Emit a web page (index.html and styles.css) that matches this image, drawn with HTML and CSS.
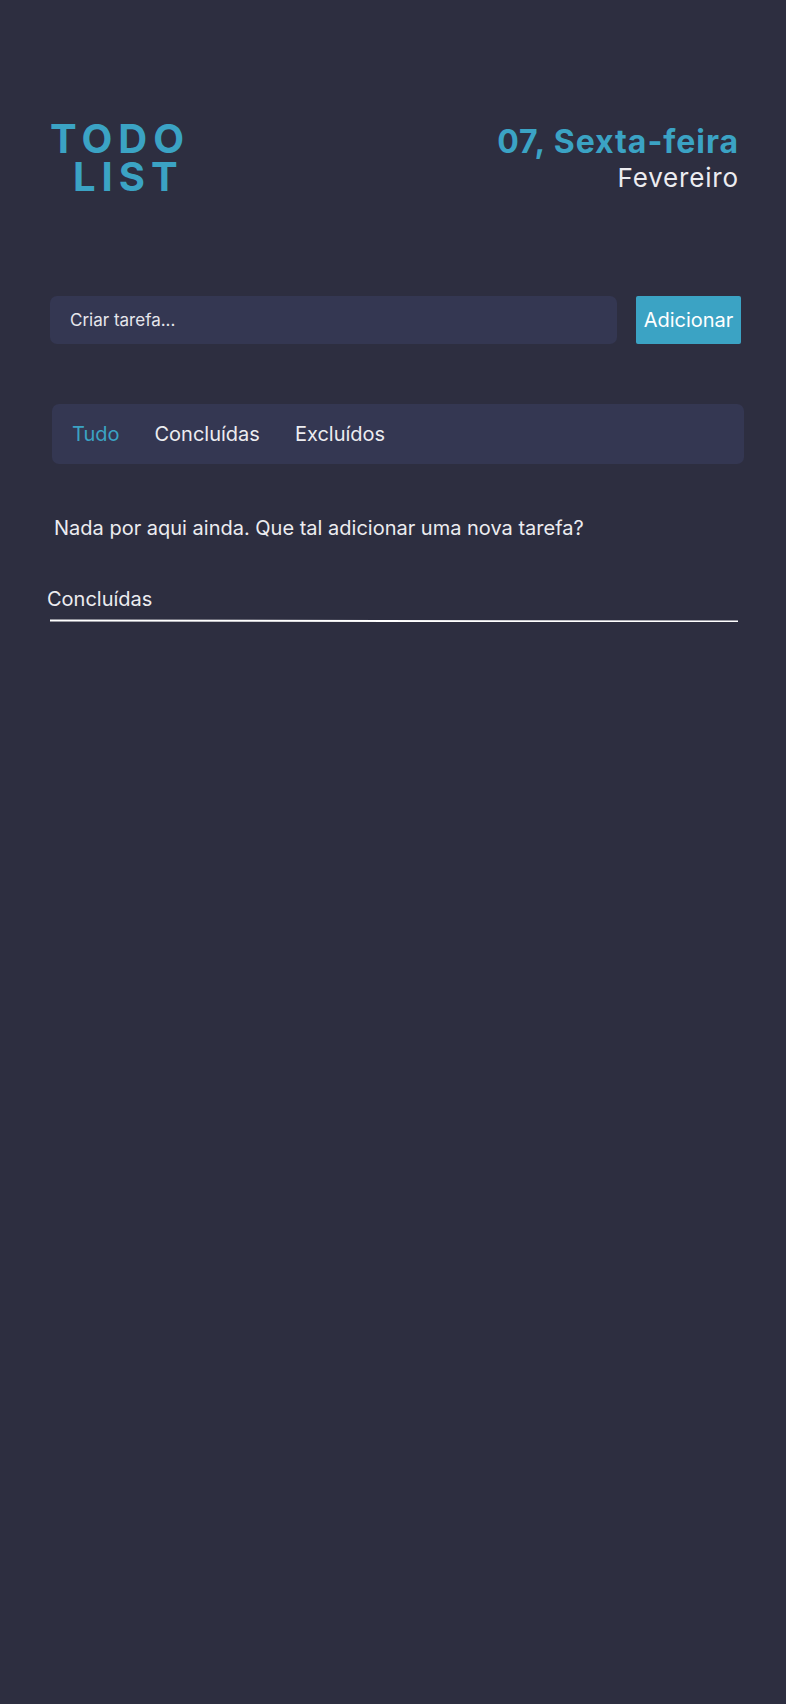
FILE: index.html
```html
<!DOCTYPE html>
<html lang="pt-BR">
<head>
<meta charset="utf-8">
<title>Todo List</title>
<link rel="stylesheet" href="styles.css">
</head>
<body>
<main class="app">
  <header class="header">
    <h1 class="logo"><span class="logo-first">TODO</span><span class="logo-second">LIST</span></h1>
    <div class="date">
      <div class="date-day">07, Sexta-feira</div>
      <div class="date-month">Fevereiro</div>
    </div>
  </header>

  <form class="task-form">
    <input class="task-input" type="text" placeholder="Criar tarefa...">
    <button class="task-add" type="button">Adicionar</button>
  </form>

  <nav class="tabs">
    <a class="tab tab-active">Tudo</a>
    <a class="tab">Concluídas</a>
    <a class="tab">Excluídos</a>
  </nav>

  <p class="empty">Nada por aqui ainda. Que tal adicionar uma nova tarefa?</p>

  <h2 class="section-title">Concluídas</h2>
  <div class="section-line"></div>
</main>
</body>
</html>
```
FILE: styles.css
```css
* { box-sizing: border-box; }

html, body {
  margin: 0;
  padding: 0;
  background: #2d2e40;
  min-height: 100%;
}

body {
  font-family: Inter, "Noto Sans", "Liberation Sans", sans-serif;
  color: #ececf0;
}

.app {
  padding: 120px 45px 0 50px;
  display: flex;
  flex-direction: column;
}

.header {
  display: flex;
  justify-content: space-between;
  align-items: flex-end;
  padding: 0 3px 0 0;
}

.logo {
  margin: 0;
  display: flex;
  flex-direction: column;
  align-items: flex-start;
  font-size: 40px;
  line-height: 38px;
  font-weight: 700;
  letter-spacing: 6px;
  color: #3ba3c4;
}

.logo-second {
  margin-left: 23px;
}

.date {
  text-align: right;
}

.date-day {
  font-size: 32px;
  line-height: 36px;
  font-weight: 700;
  letter-spacing: 0.95px;
  margin-right: -1px;
  color: #3ba3c4;
}

.date-month {
  font-size: 26px;
  line-height: 36px;
  font-weight: 400;
  letter-spacing: 0.8px;
  margin-right: -0.8px;
  color: #ececf0;
}

.task-form {
  margin-top: 100px;
  display: flex;
  gap: 19px;
}

.task-input {
  flex: 1;
  height: 48px;
  border: none;
  border-radius: 7px;
  background: #343752;
  padding: 0 20px;
  font-family: inherit;
  font-size: 17px;
  color: #ececf0;
  outline: none;
}

.task-input::placeholder {
  color: #e6e6ec;
  opacity: 1;
}

.task-add {
  width: 105px;
  height: 48px;
  border: none;
  border-radius: 2px;
  background: #3ba3c4;
  color: #ffffff;
  font-family: inherit;
  font-size: 20px;
  padding: 0;
}

.tabs {
  margin: 60px -3px 0 2px;
  height: 60px;
  background: #343752;
  border-radius: 7px;
  display: flex;
  align-items: center;
  gap: 35px;
  padding: 0 20px;
}

.tab {
  font-size: 20px;
  line-height: 24px;
  color: #ececf0;
}

.tab-active {
  color: #3ba3c4;
}

.empty {
  margin: 52px 0 0 4px;
  font-size: 20px;
  line-height: 24px;
}

.section-title {
  margin: 47px 0 0 -3px;
  font-size: 20px;
  line-height: 24px;
  font-weight: 400;
}

.section-line {
  margin: 9px 3px 0 0;
  height: 2px;
  background: #ffffff;
  transform: rotate(0.1deg);
}
```
